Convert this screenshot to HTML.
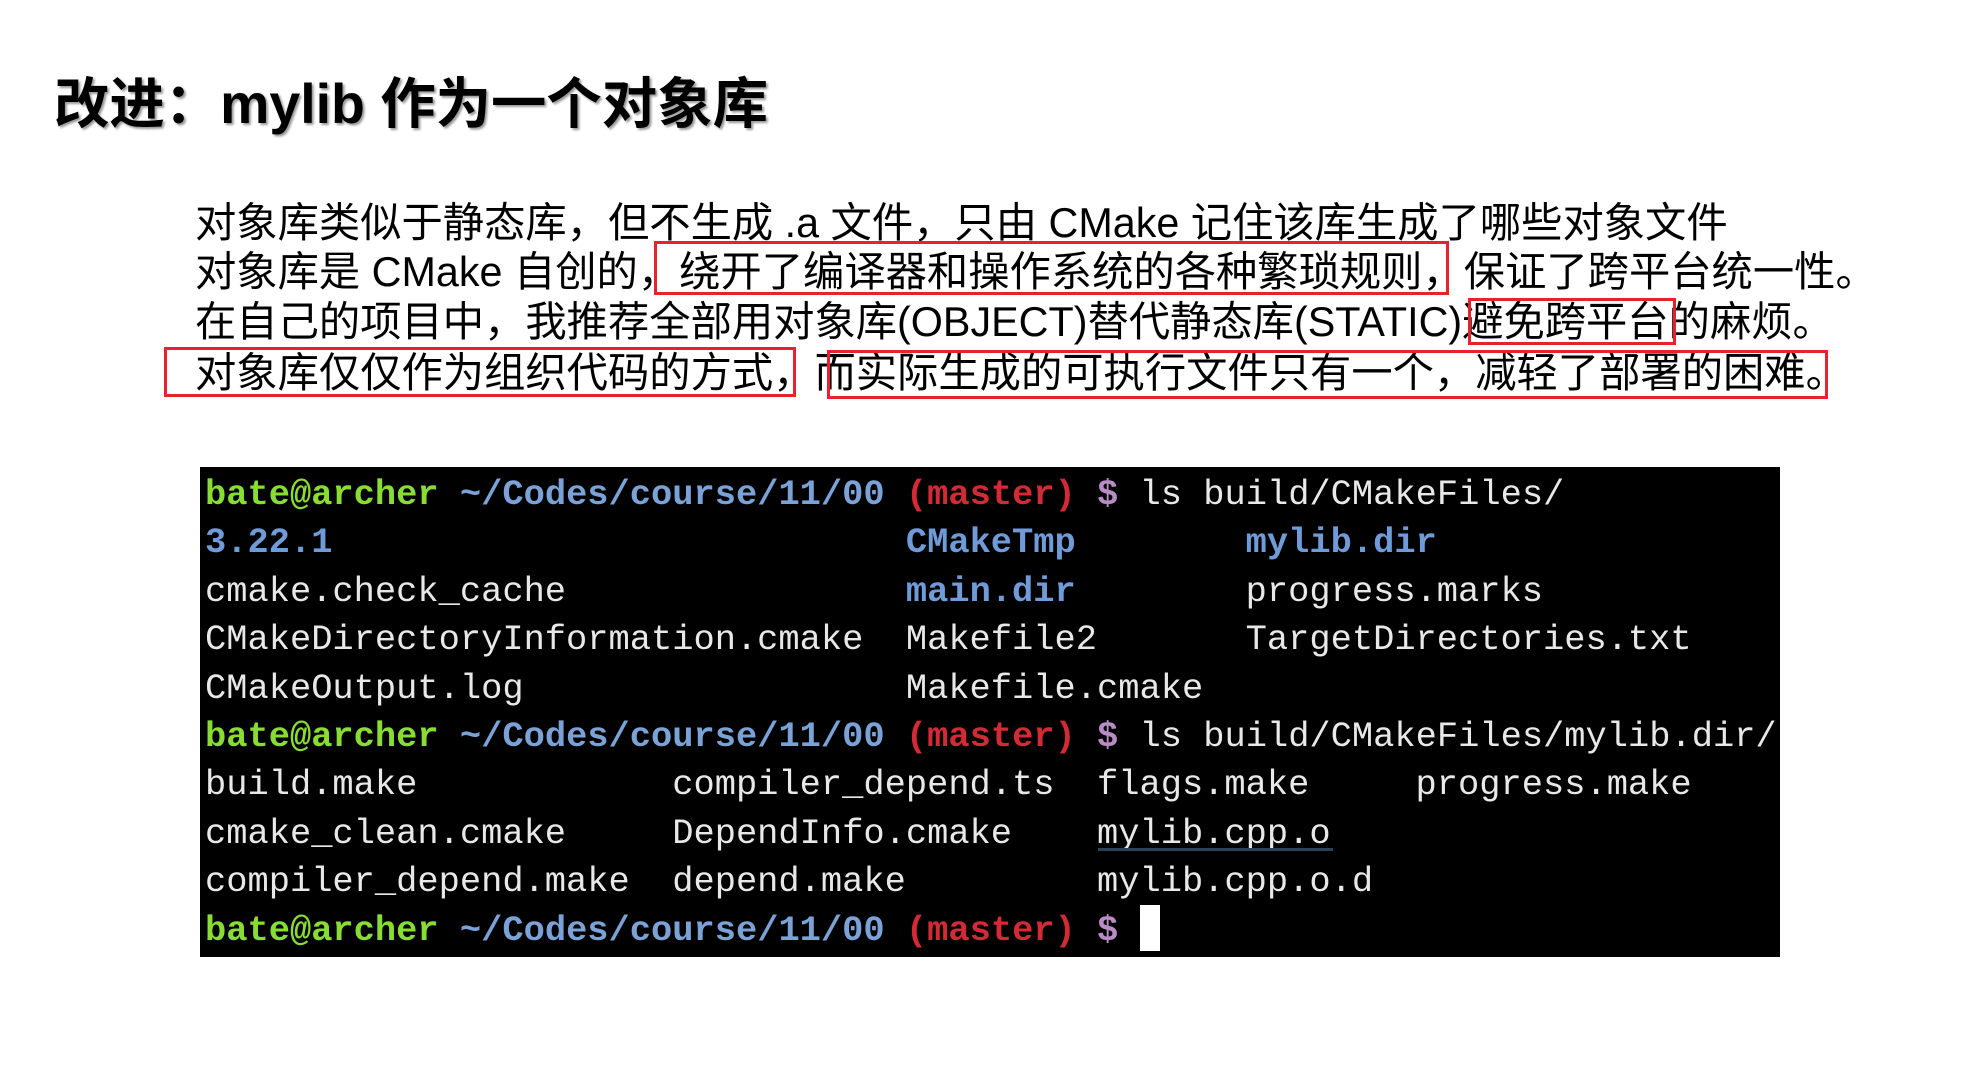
<!DOCTYPE html>
<html><head><meta charset="utf-8"><style>
html,body{margin:0;padding:0;background:#fff;width:1988px;height:1071px;overflow:hidden;position:relative}
.t{position:absolute;left:54px;top:72px;font:bold 55.4px/64px "Liberation Sans","Noto Sans CJK SC",sans-serif;color:#000;white-space:nowrap;text-shadow:2px 2px 2px #999}
.p{position:absolute;left:195px;font:41.3px/50px "Liberation Sans","Noto Sans CJK SC",sans-serif;color:#000;white-space:nowrap}
.b{position:absolute;border:3px solid #e5222d;box-sizing:border-box}
.term{position:absolute;left:200px;top:467px;width:1580px;height:490px;background:#000}
pre{position:absolute;left:205px;margin:0;font:35.4px/48.4px "Liberation Mono","DejaVu Sans Mono",monospace;color:#e8e8e8;white-space:pre}
.g{color:#88dd33;font-weight:bold}.u{color:#7aa2d6;font-weight:bold}.r{color:#d42a36;font-weight:bold}.m{color:#b98cc5;font-weight:bold}.d{color:#6f9bd8;font-weight:bold}
</style></head><body>
<div class="t">改进：mylib 作为一个对象库</div>
<div class="p" style="top:198px">对象库类似于静态库，但不生成 .a 文件，只由 CMake 记住该库生成了哪些对象文件</div>
<div class="p" style="top:247px">对象库是 CMake 自创的，绕开了编译器和操作系统的各种繁琐规则，保证了跨平台统一性。</div>
<div class="p" style="top:297px">在自己的项目中，我推荐全部用对象库(OBJECT)替代静态库(STATIC)避免跨平台的麻烦。</div>
<div class="p" style="top:348px">对象库仅仅作为组织代码的方式，而实际生成的可执行文件只有一个，减轻了部署的困难。</div>
<div class="b" style="left:654px;top:241px;width:795px;height:54px"></div>
<div class="b" style="left:1468px;top:298px;width:208px;height:47px"></div>
<div class="b" style="left:164px;top:347px;width:632px;height:50px"></div>
<div class="b" style="left:827px;top:350px;width:1001px;height:49px"></div>
<div class="term"></div>
<pre style="top:471px"><span class="g">bate@archer</span> <span class="u">~/Codes/course/11/00</span> <span class="r">(master)</span> <span class="m">$</span> ls build/CMakeFiles/
<span class="d">3.22.1</span>                           <span class="d">CMakeTmp</span>        <span class="d">mylib.dir</span>
cmake.check_cache                <span class="d">main.dir</span>        progress.marks
CMakeDirectoryInformation.cmake  Makefile2       TargetDirectories.txt
CMakeOutput.log                  Makefile.cmake
<span class="g">bate@archer</span> <span class="u">~/Codes/course/11/00</span> <span class="r">(master)</span> <span class="m">$</span> ls build/CMakeFiles/mylib.dir/
build.make            compiler_depend.ts  flags.make     progress.make
cmake_clean.cmake     DependInfo.cmake    mylib.cpp.o
compiler_depend.make  depend.make         mylib.cpp.o.d
<span class="g">bate@archer</span> <span class="u">~/Codes/course/11/00</span> <span class="r">(master)</span> <span class="m">$</span></pre>
<div style="position:absolute;left:1098px;top:848px;width:235px;height:3px;background:#2c4058"></div>
<div style="position:absolute;left:1140px;top:905px;width:20px;height:46px;background:#fff"></div>
</body></html>
